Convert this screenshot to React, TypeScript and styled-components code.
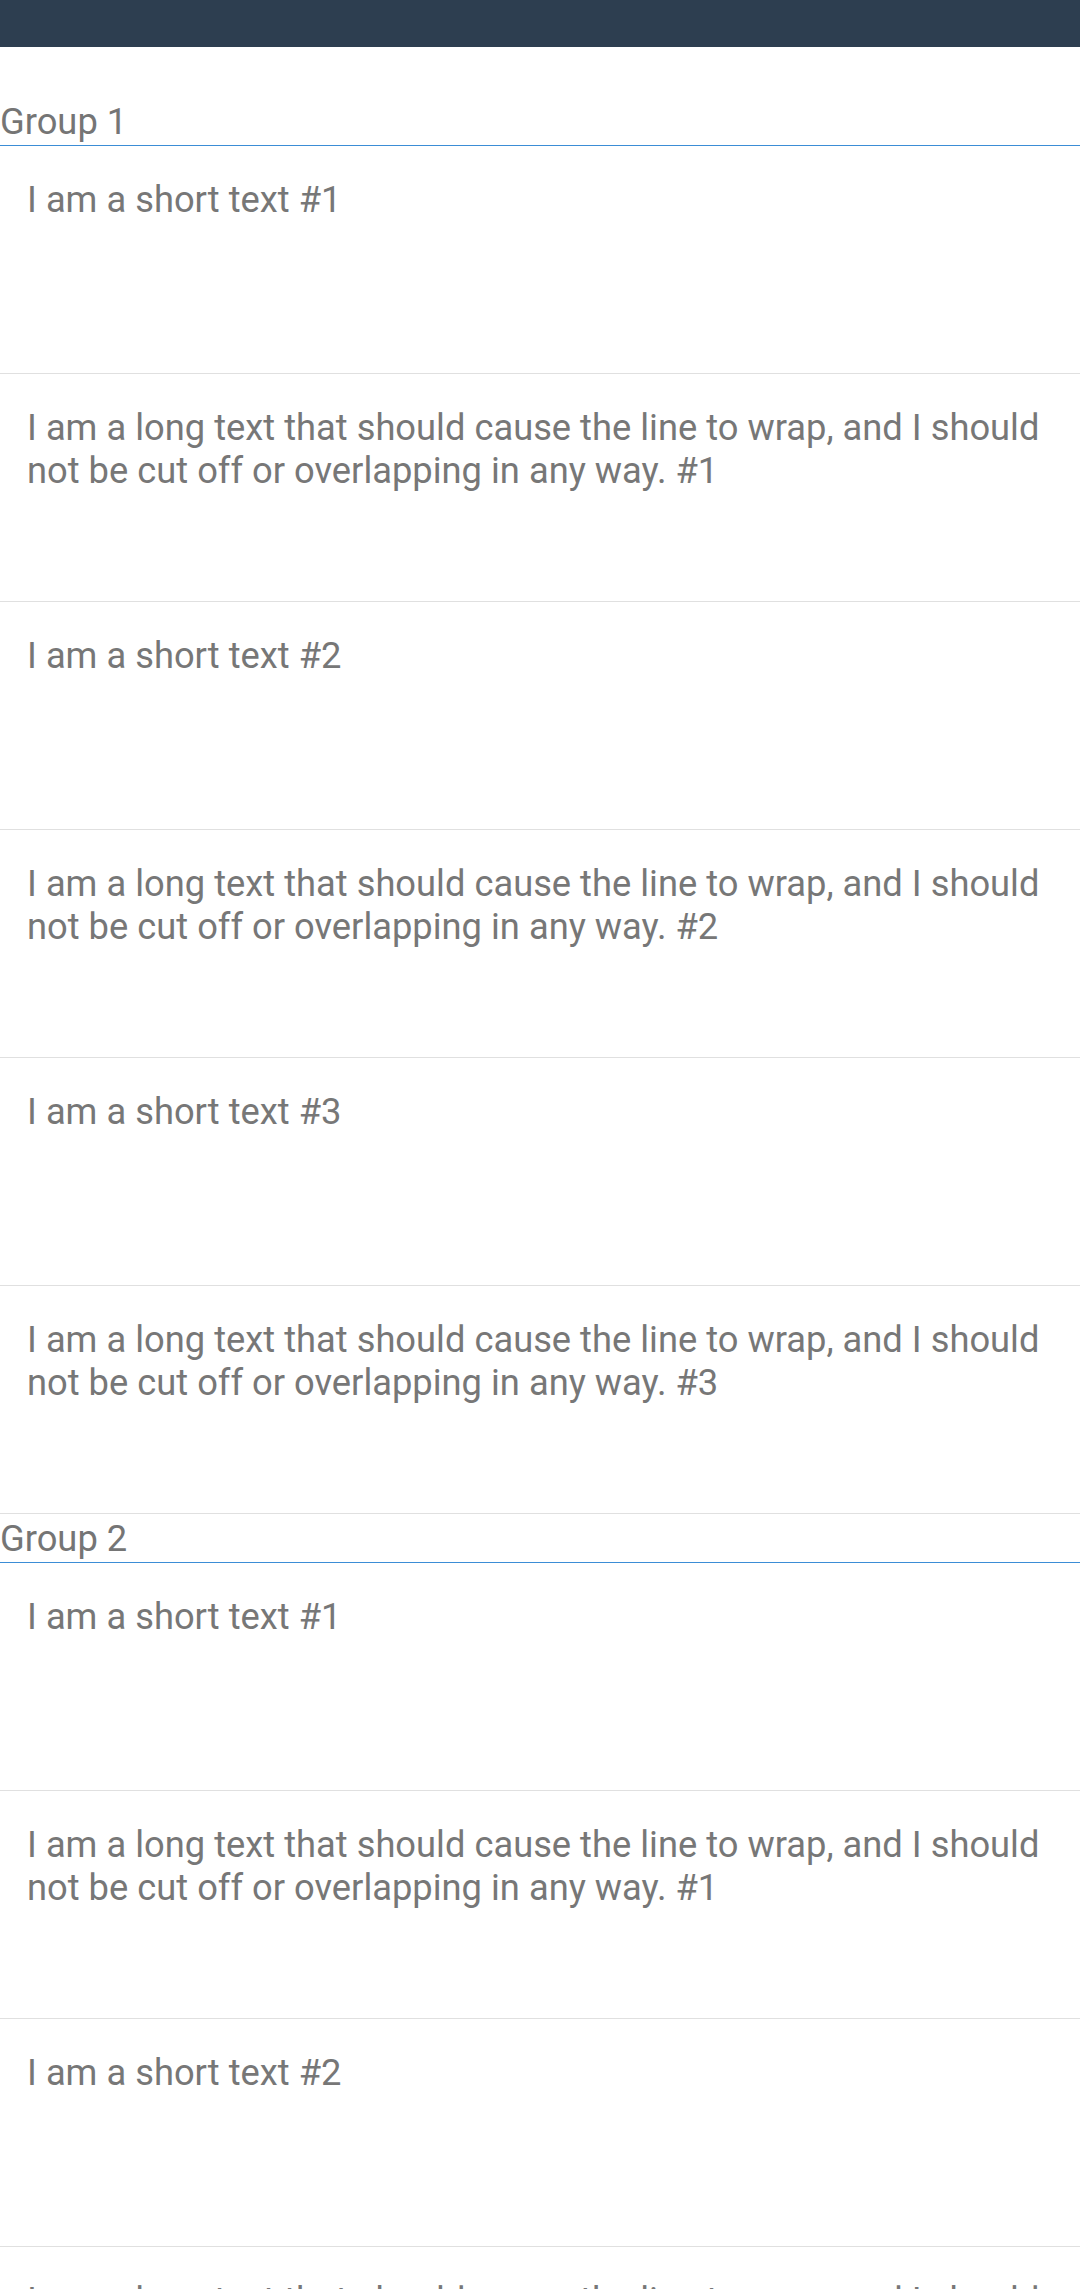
import React from 'react';
import styled, { createGlobalStyle } from 'styled-components';

const GlobalStyle = createGlobalStyle`
  html, body {
    margin: 0;
    padding: 0;
    background: #ffffff;
  }
  body {
    font-family: Roboto, "Liberation Sans", sans-serif;
  }
`;

const Page = styled.div`
  width: 1080px;
  height: 2289px;
  overflow: hidden;
  background: #ffffff;
`;

const TopBar = styled.header`
  height: 47px;
  background-color: #2d3e50;
`;

const Content = styled.main`
  padding-top: 50px;
`;

const Group = styled.section`
  display: flex;
  flex-direction: column;
`;

const GroupLabel = styled.div`
  height: 46px;
  padding-top: 2px;
  font-size: 36.3px;
  line-height: 46px;
  color: #757575;
  border-bottom: 1px solid #3b8dd6;
`;

const Row = styled.div`
  height: 228px;
  box-sizing: border-box;
  padding: 32px 24px 0 27px;
  border-bottom: 1px solid #e0e0e0;
`;

const RowText = styled.p`
  margin: 0;
  font-size: 36.3px;
  line-height: 43px;
  color: #777777;
`;

const LONG = 'I am a long text that should cause the line to wrap, and I should not be cut off or overlapping in any way.';

type Item = { id: string; text: string };

const buildItems = (count: number): Item[] => {
  const items: Item[] = [];
  for (let i = 1; i <= count; i++) {
    items.push({ id: `s${i}`, text: `I am a short text #${i}` });
    items.push({ id: `l${i}`, text: `${LONG} #${i}` });
  }
  return items;
};

const groups = [
  { title: 'Group 1', items: buildItems(3) },
  { title: 'Group 2', items: buildItems(3) },
];

const App: React.FC = () => {
  return (
    <Page>
      <GlobalStyle />
      <TopBar />
      <Content>
        {groups.map(group => (
          <Group key={group.title}>
            <GroupLabel>{group.title}</GroupLabel>
            {group.items.map(item => (
              <Row key={item.id}>
                <RowText>{item.text}</RowText>
              </Row>
            ))}
          </Group>
        ))}
      </Content>
    </Page>
  );
};

export default App;
